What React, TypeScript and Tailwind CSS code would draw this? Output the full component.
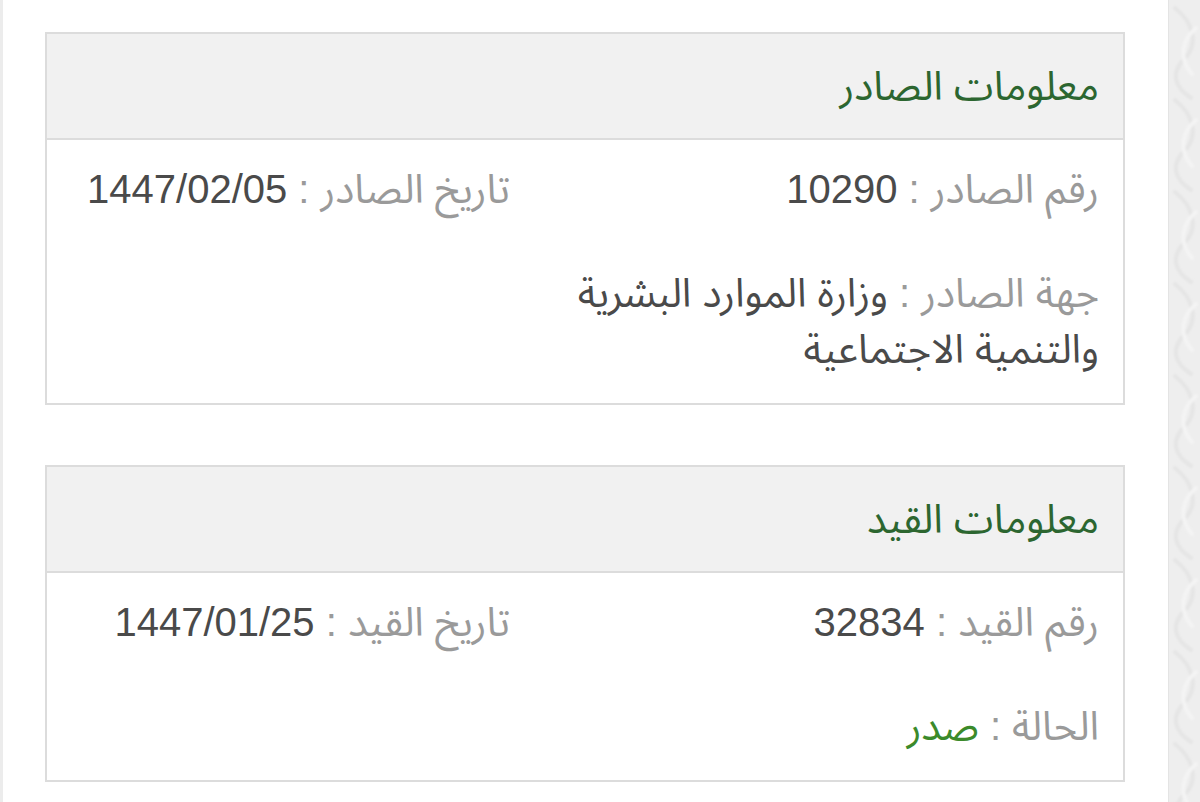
import React from "react";

const FONT = {
  fontFamily: '"Liberation Sans", "Noto Sans Arabic", "Noto Sans", "DejaVu Sans", sans-serif',
};

type Field = { label: string; value: React.ReactNode; valueClass?: string };

function FieldText({ label, value, valueClass }: Field) {
  return (
    <p className="m-0">
      <span className="text-[#9a9a9a]">{label} : </span>
      <span className={valueClass ?? "text-[#4a4a4a]"}>{value}</span>
    </p>
  );
}

function InfoCard({
  title,
  rows,
}: {
  title: string;
  rows: { right: Field; left?: Field }[];
}) {
  return (
    <section className="border-2 border-[#dcdcdc] bg-white">
      <header className="flex h-[106px] items-center border-b-2 border-[#dcdcdc] bg-[#f1f1f1] pr-[24px]">
        <h2 className="m-0 text-[40px] font-normal leading-[56px] text-[#2c6630]">{title}</h2>
      </header>
      <div className="flex flex-col gap-[48px] pt-[21px] pb-[26px] pr-[24px]">
        {rows.map((row, i) => (
          <div key={i} className="flex text-[40px] leading-[56px]">
            <div className="w-[527px] shrink-0">
              <FieldText {...row.right} />
            </div>
            <div className="mr-[62px] flex-1">{row.left && <FieldText {...row.left} />}</div>
          </div>
        ))}
      </div>
    </section>
  );
}

// Soft marbled texture of the side rail
function PatternStrip() {
  return (
    <aside className="relative w-[32px] shrink-0 overflow-hidden border-l border-[#e4e4e4] bg-[#eeeeee]">
      <svg width="32" height="802" viewBox="0 0 32 802" className="absolute inset-0" fill="none">
        <defs>
          <filter id="soft" x="-20%" y="-20%" width="140%" height="140%">
            <feGaussianBlur stdDeviation="1.2" />
          </filter>
        </defs>
        <g filter="url(#soft)" strokeLinecap="round">
          {Array.from({ length: 9 }).map((_, i) => {
            const y = i * 92;
            return (
              <g key={i}>
                <path
                  d={`M6 ${y + 8} C 24 ${y + 22}, 30 ${y + 44}, 16 ${y + 58} S 4 ${y + 86}, 22 ${y + 98}`}
                  stroke="#e5e5e5"
                  strokeWidth="4"
                />
                <path
                  d={`M27 ${y + 28} C 13 ${y + 40}, 9 ${y + 58}, 23 ${y + 74}`}
                  stroke="#f4f4f4"
                  strokeWidth="4"
                />
              </g>
            );
          })}
        </g>
      </svg>
    </aside>
  );
}

export default function App() {
  return (
    <div className="flex h-[802px] w-[1200px] overflow-hidden bg-white" style={FONT}>
      <div className="w-[3px] shrink-0 bg-[#ececec]" />
      <main dir="rtl" className="flex flex-1 flex-col gap-[60px] pt-[32px] pr-[43px] pl-[42px]">
        <InfoCard
          title="معلومات الصادر"
          rows={[
            {
              right: { label: "رقم الصادر", value: "10290" },
              left: { label: "تاريخ الصادر", value: "1447/02/05" },
            },
            {
              right: {
                label: "جهة الصادر",
                value: (
                  <>
                    وزارة الموارد البشرية
                    <br />
                    والتنمية الاجتماعية
                  </>
                ),
              },
            },
          ]}
        />
        <InfoCard
          title="معلومات القيد"
          rows={[
            {
              right: { label: "رقم القيد", value: "32834" },
              left: { label: "تاريخ القيد", value: "1447/01/25" },
            },
            {
              right: { label: "الحالة", value: "صدر", valueClass: "text-[#3b8a2a]" },
            },
          ]}
        />
      </main>
      <PatternStrip />
    </div>
  );
}
